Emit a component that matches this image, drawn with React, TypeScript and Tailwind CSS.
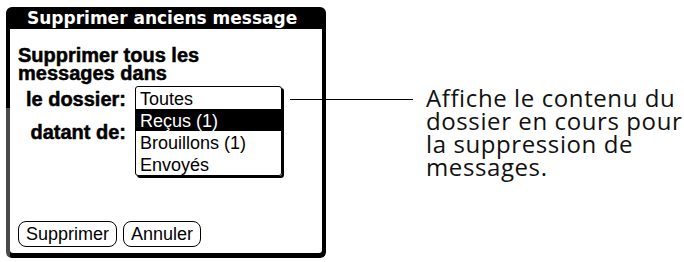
import React from 'react';

const folders = [
  { label: 'Toutes', active: false },
  { label: 'Reçus (1)', active: true },
  { label: 'Brouillons (1)', active: false },
  { label: 'Envoyés', active: false },
];

export default function App() {
  return (
    <div className="relative w-[684px] h-[262px] overflow-hidden bg-white flex items-start text-black">
      <PurgeDialog />

      {/* trait de légende */}
      <div className="absolute left-[290px] top-[99px] w-[123px] h-px bg-black" />

      <div className="ml-[100px] mt-[86px] whitespace-nowrap font-['Open_Sans',sans-serif] text-[24px] leading-[23px] tracking-[0.6px] text-[#111]">
        <div>Affiche le contenu du</div>
        <div>dossier en cours pour</div>
        <div>la suppression de</div>
        <div>messages.</div>
      </div>
    </div>
  );
}

function PurgeDialog() {
  return (
    <div className="ml-[6px] mt-[7px] w-[320px] h-[251px] flex flex-col shrink-0">
      <div className="h-[22px] bg-black rounded-t-[6px] pl-[21px] text-white font-['DejaVu_Sans',sans-serif] font-bold text-[17px] leading-[22px] whitespace-nowrap">
        Supprimer anciens message
      </div>

      <div className="flex-1 flex rounded-b-[6px] px-[4px] pb-[5px] [background:linear-gradient(#000,#000)_top/100%_79px_no-repeat,linear-gradient(to_right,#4a4a4a_4px,#000_4px)]">
        <div className="flex-1 flex flex-col bg-white rounded-b-[3px]">
          <div className="pl-[8px] pt-[17px] font-['Liberation_Sans',sans-serif] font-bold text-[20px] leading-[18px] whitespace-nowrap [-webkit-text-stroke:0.5px_#000]">
            <div>Supprimer tous les</div>
            <div>messages dans</div>
          </div>

          <div className="mt-[4px] flex items-start">
            <div className="w-[116px] text-right font-['Liberation_Sans',sans-serif] font-bold text-[20px] leading-[22px] whitespace-nowrap [-webkit-text-stroke:0.5px_#000]">
              <div className="pt-[2px]">le dossier:</div>
              <div className="mt-[11px]">datant de:</div>
            </div>

            <ul className="ml-[9px] w-[147px] border border-black rounded-[3px] shadow-[2px_2px_0_0_#000] font-['Liberation_Sans',sans-serif] text-[18px]">
              {folders.map(f => (
                <li
                  key={f.label}
                  className={
                    f.active
                      ? 'h-[22px] leading-[24px] pl-[4px] bg-black text-white whitespace-nowrap'
                      : 'h-[22px] leading-[24px] pl-[4px] whitespace-nowrap'
                  }
                >
                  {f.label}
                </li>
              ))}
            </ul>
          </div>

          <div className="mt-auto pb-[6px] pl-[8px] flex gap-[6px]">
            <PalmButton>Supprimer</PalmButton>
            <PalmButton>Annuler</PalmButton>
          </div>
        </div>
      </div>
    </div>
  );
}

function PalmButton({ children }: { children: React.ReactNode }) {
  return (
    <button
      type="button"
      className="h-[26px] border-[1.5px] border-black rounded-[8px] px-[7px] font-['Liberation_Sans',sans-serif] text-[18px] leading-[23px]"
    >
      {children}
    </button>
  );
}
